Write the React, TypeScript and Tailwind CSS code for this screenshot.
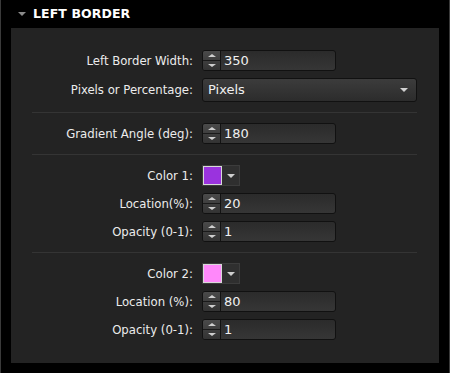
import React from 'react';

const font = { fontFamily: '"Lucida Grande", "DejaVu Sans", sans-serif' };
const labelFont = { fontFamily: '"DejaVu Sans Condensed", "DejaVu Sans", sans-serif' };

function Spinner() {
  return (
    <div className="flex flex-col w-[18px] h-full border-r border-[#121212] bg-gradient-to-b from-[#4a4a4a] to-[#333]">
      <div className="flex-1 flex items-center justify-center border-b border-[#1a1a1a]">
        <div className="w-0 h-0 border-l-[4px] border-r-[4px] border-b-[3px] border-l-transparent border-r-transparent border-b-[#cfcfcf]" />
      </div>
      <div className="flex-1 flex items-center justify-center">
        <div className="w-0 h-0 border-l-[4px] border-r-[4px] border-t-[3px] border-l-transparent border-r-transparent border-t-[#cfcfcf]" />
      </div>
    </div>
  );
}

function NumberField({ value }: { value: string }) {
  return (
    <div className="flex h-[21px] w-[134px] rounded-[3px] border border-[#111] overflow-hidden bg-gradient-to-b from-[#2b2b2b] to-[#363636]">
      <Spinner />
      <span className="pl-[3px] text-[13px] leading-[19px] text-[#f0f0f0]">{value}</span>
    </div>
  );
}

function ColorField({ color }: { color: string }) {
  return (
    <div className="flex h-[21px] w-[38px] border border-[#3c3c3c] bg-[#2f2f2f]">
      <div className="w-[19px] h-full border border-[#d8d8d8]" style={{ backgroundColor: color }} />
      <div className="flex-1 flex items-center justify-center">
        <div className="w-0 h-0 border-l-[4px] border-r-[4px] border-t-[4px] border-l-transparent border-r-transparent border-t-[#cfcfcf]" />
      </div>
    </div>
  );
}

function Row({ label, children }: { label: string; children: React.ReactNode }) {
  return (
    <div className="flex items-center gap-[9px]">
      <span style={labelFont} className="w-[182px] text-right text-[13px] text-[#ececec]">{label}</span>
      {children}
    </div>
  );
}

function Divider() {
  return <div className="h-px bg-[#343434] ml-[21px] mr-[22px]" />;
}

export default function App() {
  return (
    <div style={font} className="w-[450px] h-[373px] bg-black border-x border-[#3a3a3a] flex flex-col">
      {/* Header */}
      <div className="h-[28px] flex items-center pl-[17px] gap-[7px]">
        <div className="w-0 h-0 border-l-[4px] border-r-[4px] border-t-[4px] border-l-transparent border-r-transparent border-t-[#8a8a8a]" />
        <span className="text-[12.5px] font-bold text-white tracking-[0.1px]">LEFT BORDER</span>
      </div>

      {/* Panel */}
      <div className="ml-[10px] w-[428px] h-[335px] bg-[#232323] pt-[22px]">
        <div className="flex flex-col gap-[7px]">
          <Row label="Left Border Width:">
            <NumberField value="350" />
          </Row>
          <Row label="Pixels or Percentage:">
            <div className="flex items-center justify-between h-[24px] w-[215px] rounded-[3px] border border-[#111] bg-gradient-to-b from-[#3c3c3c] to-[#2c2c2c] pl-[5px] pr-[8px]">
              <span className="text-[13px] text-[#f0f0f0]">Pixels</span>
              <div className="w-0 h-0 border-l-[4px] border-r-[4px] border-t-[4px] border-l-transparent border-r-transparent border-t-[#d0d0d0]" />
            </div>
          </Row>
        </div>

        <div className="my-[10px]"><Divider /></div>

        <Row label="Gradient Angle (deg):">
          <NumberField value="180" />
        </Row>

        <div className="my-[10px]"><Divider /></div>

        <div className="flex flex-col gap-[7px]">
          <Row label="Color 1:">
            <ColorField color="#9a33de" />
          </Row>
          <Row label="Location(%):">
            <NumberField value="20" />
          </Row>
          <Row label="Opacity (0-1):">
            <NumberField value="1" />
          </Row>
        </div>

        <div className="my-[10px]"><Divider /></div>

        <div className="flex flex-col gap-[7px]">
          <Row label="Color 2:">
            <ColorField color="#ff88fa" />
          </Row>
          <Row label="Location (%):">
            <NumberField value="80" />
          </Row>
          <Row label="Opacity (0-1):">
            <NumberField value="1" />
          </Row>
        </div>
      </div>
    </div>
  );
}
